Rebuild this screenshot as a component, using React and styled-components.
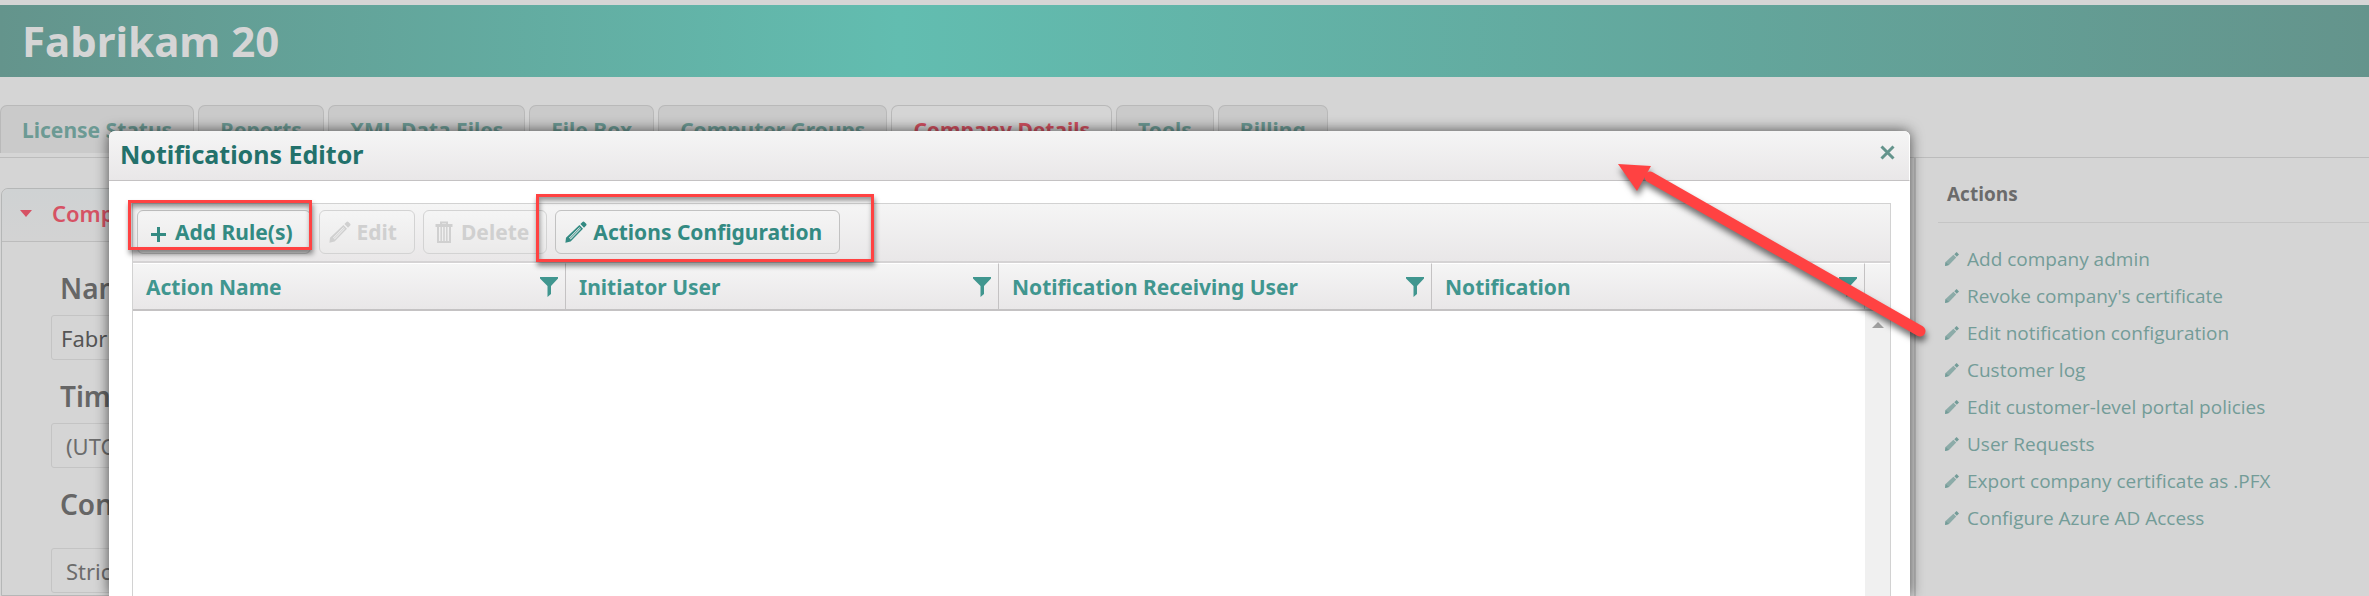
import React from 'react';
import styled, { createGlobalStyle, css } from 'styled-components';

const Global = createGlobalStyle`
  * { box-sizing: border-box; }
  body { margin: 0; background: #d5d5d5; font-family: 'Noto Sans', 'Open Sans', sans-serif; overflow: hidden; }
  button, input, select { font-family: inherit; }
`;

const Page = styled.div`
  position: relative;
  height: 100vh;
  padding-top: 5px;
  overflow: hidden;
  display: flex;
  flex-direction: column;
`;
const Banner = styled.header`
  flex: none;
  height: 72px;
  padding: 0 22px;
  display: flex;
  align-items: center;
  background: linear-gradient(90deg, #64948c 0%, #62bdb0 38%, #64948c 100%);
`;
const BannerTitle = styled.h1`
  margin: 0;
  font-size: 42px;
  line-height: 72px;
  font-weight: 700;
  color: #d5d5d5;
`;
const Tabs = styled.nav`
  flex: none;
  display: flex;
  gap: 4px;
  margin-top: 28px;
  padding-bottom: 4px;
  border-bottom: 1px solid #bcbcbc;
`;
const Tab = styled.button`
  height: 48px;
  padding: 0 21px;
  border: 1px solid #b9b9b9;
  border-bottom: 0;
  border-radius: 7px 7px 0 0;
  background: ${p => (p.$active ? '#d5d5d5' : '#cacaca')};
  color: ${p => (p.$active ? '#d15060' : '#6c9a94')};
  font-size: 21px;
  font-weight: 700;
  white-space: nowrap;
`;
const Columns = styled.div`
  flex: 1;
  display: flex;
  min-height: 0;
`;
const Main = styled.main`
  flex: 1;
  padding: 30px 24px 0 1px;
`;
const Panel = styled.section`
  border: 1px solid #b5b7b7;
  border-radius: 7px 7px 0 0;
  height: 100%;
`;
const PanelHead = styled.h2`
  margin: 0;
  height: 53px;
  padding: 0 14px 4px 18px;
  display: flex;
  align-items: center;
  gap: 20px;
  font-size: 22px;
  font-weight: 600;
  color: #d65264;
  border-bottom: 1px solid #bcbcbc;
  border-radius: 7px 7px 0 0;
  background: linear-gradient(#cfd2d3, #d3d3d3);
`;
const Form = styled.form`
  display: flex;
  flex-direction: column;
  padding: 26px 49px;
`;
const Label = styled.label`
  padding-left: 9px;
  font-size: 28px;
  line-height: 40px;
  font-weight: 600;
  color: #666;
`;
const fieldLook = css`
  flex: none;
  width: 480px;
  height: 45px;
  margin: 7px 0 16px;
  border: 1px solid #c4c4c4;
  border-radius: 3px;
  background: transparent;
  font-size: 22px;
`;
const TextField = styled.input`
  ${fieldLook}
  padding: 0 9px;
  color: #555;
`;
const SelectField = styled.select`
  ${fieldLook}
  padding: 0 14px;
  appearance: none;
  color: #6c6c6c;
  margin-top: ${p => (p.$spaced ? '24px' : '7px')};
`;
const Sidebar = styled.aside`
  flex: none;
  width: 455px;
  padding-left: 22px;
  border-left: 2px solid #bdbdbd;
`;
const SideTitle = styled.h3`
  margin: 0;
  padding: 19px 9px 0;
  height: 65px;
  border-bottom: 1px solid #c5c5c5;
  font-family: 'Open Sans', sans-serif;
  font-size: 19px;
  line-height: 34px;
  font-weight: 700;
  color: #6b6b6b;
`;
const LinkList = styled.ul`
  list-style: none;
  margin: 17px 0 0;
  padding: 0 7px;
`;
const SideLink = styled.a`
  display: flex;
  align-items: center;
  gap: 8px;
  height: 37px;
  font-family: 'Open Sans', sans-serif;
  font-size: 19px;
  color: #739c98;
  text-decoration: none;
  white-space: nowrap;
`;
const Modal = styled.div`
  position: absolute;
  top: 131px;
  left: 109px;
  right: 459px;
  bottom: 0;
  display: flex;
  flex-direction: column;
  background: #fff;
  border-radius: 6px 6px 0 0;
  box-shadow: 0 0 14px rgba(0, 0, 0, 0.65);
`;
const ModalHead = styled.div`
  flex: none;
  display: flex;
  align-items: center;
  justify-content: space-between;
  height: 50px;
  padding: 0 14px 4px 11px;
  border-bottom: 1px solid #c4c2c3;
  border-right: 1px solid #fff;
  border-radius: 6px 6px 0 0;
  background: linear-gradient(#f5f5f5, #e9e7e8);
`;
const ModalTitle = styled.h2`
  margin: 0;
  font-size: 25px;
  line-height: 44px;
  font-weight: 700;
  color: #23716b;
`;
const CloseButton = styled.button`
  display: flex;
  padding: 0;
  margin-bottom: 2px;
  border: 0;
  background: none;
  color: #64948c;
`;
const Grid = styled.div`
  flex: 1;
  display: flex;
  flex-direction: column;
  margin: 22px 19px 0 23px;
  border: 1px solid #d2d2d2;
  border-bottom: 0;
`;
const Toolbar = styled.div`
  position: relative;
  flex: none;
  display: flex;
  gap: 8px;
  height: 59px;
  padding: 6px 4px;
  border-bottom: 2px solid #d5d3d4;
  background: linear-gradient(#f5f5f5, #e9e7e8);
`;
const ToolButton = styled.button`
  display: flex;
  align-items: center;
  gap: 6px;
  height: 44px;
  padding: 0 17px 0 9px;
  border: 1px solid #c2c2c2;
  border-radius: 6px;
  background: linear-gradient(#f5f5f5, #ebeaea);
  color: #338a82;
  font-size: 21px;
  font-weight: 700;
  white-space: nowrap;
  &:disabled { color: #d0d0d0; border-color: #d3d3d3; }
`;
const Highlight = styled.div`
  position: absolute;
  top: ${p => p.$top}px;
  left: ${p => p.$left}px;
  width: ${p => p.$width}px;
  height: ${p => p.$height}px;
  border: 3px solid #ff4242;
  box-shadow: 1px 4px 5px rgba(0, 0, 0, 0.45), inset 1px 4px 5px rgba(0, 0, 0, 0.4);
  pointer-events: none;
`;
const Table = styled.table`
  flex: 1;
  width: 100%;
  table-layout: fixed;
  border-collapse: separate;
  border-spacing: 0;
`;
const HeadCell = styled.th`
  height: 48px;
  padding: 0 7px 0 13px;
  border-top: 1px solid #fff;
  border-right: ${p => (p.$last ? '0' : '1px solid #c4c2c3')};
  border-bottom: 2px solid #c4c2c3;
  background: linear-gradient(#f5f5f5, #e9e7e8);
  color: #40968f;
  font-size: 21px;
  font-weight: 700;
  text-align: left;
  width: ${p => (p.$last ? '25px' : 'auto')};
`;
const HeadInner = styled.div`
  display: flex;
  align-items: center;
  justify-content: space-between;
`;
const EmptyCell = styled.td`
  padding: 0;
  background: #fff;
`;
const ScrollCell = styled.td`
  padding: 11px 0 0 7px;
  vertical-align: top;
  line-height: 0;
  background: #f0f0f0;
`;
const Arrow = styled.svg`
  position: absolute;
  top: 25px;
  right: -26px;
  pointer-events: none;
  filter: drop-shadow(1px 5px 3px rgba(0, 0, 0, 0.55));
`;

const Pencil = () => (
  <svg width="22" height="22" viewBox="0 0 22 22" aria-hidden="true">
    <path d="M15.4 3 L17.8 .8 Q18.6 .2 19.4 1 L21.2 2.8 Q22 3.6 21.2 4.4 L19 6.7 Z" fill="currentColor" />
    <path fillRule="evenodd" d="M14.4 4 L18 7.7 L5.6 20.6 L.4 21.8 L1 16.8 Z M4 16.8 L5.6 18.4 L16 7.8 L14.4 6.2 Z" fill="currentColor" />
    <path d="M4.6 17.8 L15.3 7" stroke="currentColor" strokeWidth="1" />
  </svg>
);
const Plus = () => (
  <svg width="22" height="22" viewBox="0 0 22 22" aria-hidden="true">
    <path d="M11.5 6 V21 M4 13.5 H19" stroke="currentColor" strokeWidth="3" />
  </svg>
);
const Trash = () => (
  <svg width="22" height="22" viewBox="0 0 22 22" fill="none" stroke="currentColor" aria-hidden="true">
    <path d="M2.5 4.5 H19.5" strokeWidth="3" />
    <path d="M8 3 V1.5 H14 V3" strokeWidth="2" />
    <path d="M5 6 V21 H17 V6" strokeWidth="2" />
    <path d="M8.2 6 V20 M11 6 V20 M13.8 6 V20" strokeWidth="1.5" />
  </svg>
);
const Funnel = () => (
  <svg width="18" height="20" viewBox="0 0 18 20" aria-hidden="true">
    <path d="M0 0 H18 V1.5 L11 9 V17 L7.5 20 V9 L0 1.5 Z" fill="currentColor" />
  </svg>
);
const SmallPencil = () => (
  <svg width="14" height="14" viewBox="0 0 14 14" aria-hidden="true">
    <path d="M11.6 0 L14 2.4 L11.8 4.8 L9.3 2.3 Z" fill="currentColor" />
    <path d="M8.4 2.8 L11.2 5.6 L4 13 L0 14 L.6 10 Z" fill="currentColor" opacity=".75" />
    <path d="M.6 10 L4 13 L0 14 Z" fill="currentColor" />
  </svg>
);

const tabs = ['License Status', 'Reports', 'XML Data Files', 'File Box', 'Computer Groups', 'Company Details', 'Tools', 'Billing'];
const links = ['Add company admin', "Revoke company's certificate", 'Edit notification configuration', 'Customer log', 'Edit customer-level portal policies', 'User Requests', 'Export company certificate as .PFX', 'Configure Azure AD Access'];
const columns = ['Action Name', 'Initiator User', 'Notification Receiving User', 'Notification'];

export default function App() {
  return (
    <Page>
      <Global />
      <Banner><BannerTitle>Fabrikam 20</BannerTitle></Banner>
      <Tabs>
        {tabs.map(t => <Tab key={t} $active={t === 'Company Details'}>{t}</Tab>)}
      </Tabs>
      <Columns>
        <Main>
          <Panel>
            <PanelHead>
              <svg width="12" height="7" viewBox="0 0 12 7" aria-hidden="true"><path d="M0 0 H12 L6 7 Z" fill="currentColor" /></svg>
              Company
            </PanelHead>
            <Form>
              <Label htmlFor="name">Name</Label>
              <TextField id="name" defaultValue="Fabrikam 20" />
              <Label htmlFor="zone">Time Zone</Label>
              <SelectField id="zone"><option>(UTC)</option></SelectField>
              <Label htmlFor="conf">Configuration</Label>
              <SelectField id="conf" $spaced><option>Strict</option></SelectField>
            </Form>
          </Panel>
        </Main>
        <Sidebar>
          <SideTitle>Actions</SideTitle>
          <LinkList>
            {links.map(l => <li key={l}><SideLink href="#"><SmallPencil />{l}</SideLink></li>)}
          </LinkList>
        </Sidebar>
      </Columns>
      <Modal role="dialog" aria-labelledby="dialog-title">
        <ModalHead>
          <ModalTitle id="dialog-title">Notifications Editor</ModalTitle>
          <CloseButton aria-label="Close">
            <svg width="15" height="15" viewBox="0 0 15 15"><path d="M1.5 1.5 L13.5 13.5 M13.5 1.5 L1.5 13.5" stroke="currentColor" strokeWidth="3" /></svg>
          </CloseButton>
        </ModalHead>
        <Grid>
          <Toolbar>
            <ToolButton><Plus />Add Rule(s)</ToolButton>
            <ToolButton disabled><Pencil />Edit</ToolButton>
            <ToolButton disabled><Trash />Delete</ToolButton>
            <ToolButton><Pencil />Actions Configuration</ToolButton>
            <Highlight $left={-5} $top={-4} $width={184} $height={50} />
            <Highlight $left={403} $top={-10} $width={338} $height={68} />
          </Toolbar>
          <Table>
            <thead>
              <tr>
                {columns.map(c => <HeadCell key={c}><HeadInner>{c}<Funnel /></HeadInner></HeadCell>)}
                <HeadCell $last />
              </tr>
            </thead>
            <tbody>
              <tr>
                <EmptyCell colSpan={4} />
                <ScrollCell><svg width="12" height="6" viewBox="0 0 12 6" aria-hidden="true"><path d="M0 6 H12 L6 0 Z" fill="#a0a0a0" /></svg></ScrollCell>
              </tr>
            </tbody>
          </Table>
        </Grid>
        <Arrow width="320" height="190" viewBox="0 0 320 190" aria-hidden="true">
          <path d="M34 21 L304 175" stroke="#ff4242" strokeWidth="11" strokeLinecap="round" />
          <path d="M2 8 L35 10 L21 35 Z" fill="#ff4242" />
        </Arrow>
      </Modal>
    </Page>
  );
}
